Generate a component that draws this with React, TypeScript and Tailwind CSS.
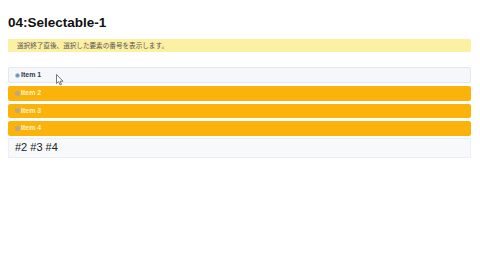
import React from "react";

const items = [
  { label: "Item 1", selected: false },
  { label: "Item 2", selected: true },
  { label: "Item 3", selected: true },
  { label: "Item 4", selected: true },
];

export default function App() {
  return (
    <div
      className="relative w-[480px] h-[270px] bg-white pl-2 pr-[9px] overflow-hidden"
      style={{ fontFamily: '"Liberation Sans", "Noto Sans CJK JP", sans-serif' }}
    >
      <h1 className="pt-[15px] text-[13.5px] leading-[16px] font-bold text-[#111]">
        04:Selectable-1
      </h1>
      <div className="mt-[8px] h-[13px] bg-[#fcf0a2] rounded-[1px] pl-[9px] flex items-center text-[6.6px] text-[#555]">
        選択終了直後、選択した要素の番号を表示します。
      </div>
      <div className="mt-[15px] flex flex-col gap-[3px]">
        {items.map((it) =>
          it.selected ? (
            <div
              key={it.label}
              className="h-[14.5px] bg-[#fbb20b] rounded-[2px] flex items-center pl-[7px] text-[7px] font-semibold text-[#fff3d0]"
            >
              <span className="w-[5px] h-[5px] rounded-full bg-[#b9a789] mr-[1px]" />
              {it.label}
            </div>
          ) : (
            <div
              key={it.label}
              className="h-[16px] bg-[#f6f7fb] border border-[#e6e8ef] rounded-[2px] flex items-center pl-[6px] text-[7px] font-semibold text-[#2e3a4a]"
            >
              <span className="w-[5px] h-[5px] rounded-full bg-[#5b92c8] border border-[#a9c6e4] mr-[1px]" />
              {it.label}
            </div>
          )
        )}
        <div className="-mt-[1px] h-[20px] bg-[#f8f9fb] border border-[#eceef3] flex items-center pl-[6px] text-[11px] text-[#222]">
          #2 #3 #4
        </div>
      </div>
      <svg
        className="absolute left-[56px] top-[74px]"
        width="8"
        height="12"
        viewBox="0 0 8 12"
      >
        <path d="M0.5 0.5 L0.5 9.5 L2.6 7.6 L4.2 11 L5.5 10.4 L4 7.2 L7 7.2 Z" fill="#fff" stroke="#555" strokeWidth="0.8" />
      </svg>
    </div>
  );
}
